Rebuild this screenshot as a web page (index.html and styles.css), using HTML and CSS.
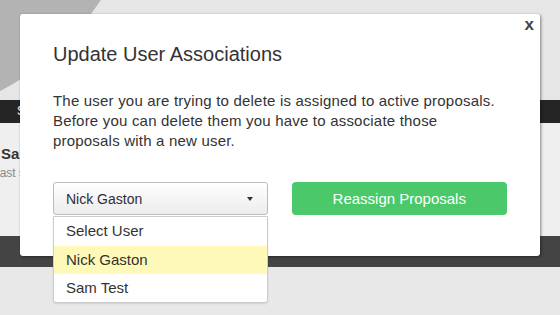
FILE: index.html
```html
<!DOCTYPE html>
<html lang="en">
<head>
    <meta charset="UTF-8">
    <title>Update User Associations</title>
    <link rel="stylesheet" href="styles.css">
</head>
<body>
    <div class="page">
        <header class="hero">
            <div class="avatar"></div>
        </header>
        <nav class="topbar"><span class="topbar-name">Sam Test</span></nav>
        <section class="profile">
            <div class="profile-name">Sam Test</div>
            <div class="profile-meta">Last seen 2 days ago</div>
        </section>
        <div class="band"></div>

        <div class="modal">
            <button class="modal-close">x</button>
            <h2 class="modal-title">Update User Associations</h2>
            <p class="modal-text">The user you are trying to delete is assigned to active proposals.<br>Before you can delete them you have to associate those<br>proposals with a new user.</p>
            <div class="actions">
                <div class="select">
                    <div class="select-value">
                        <span>Nick Gaston</span>
                        <span class="caret"></span>
                    </div>
                    <ul class="select-menu">
                        <li>Select User</li>
                        <li class="active">Nick Gaston</li>
                        <li>Sam Test</li>
                    </ul>
                </div>
                <button class="btn">Reassign Proposals</button>
            </div>
        </div>
    </div>
</body>
</html>
```

FILE: styles.css
```css
* {
    margin: 0;
    padding: 0;
    box-sizing: border-box;
}

body {
    font-family: "Liberation Sans", Arial, sans-serif;
    background: #e8e8e8;
    color: #333;
}

.page {
    position: relative;
    width: 560px;
    height: 315px;
    overflow: hidden;
}

.hero {
    height: 100px;
    background: #e6e6e6;
    overflow: hidden;
}

.avatar {
    width: 544px;
    height: 544px;
    margin: -422px 0 0 -398px;
    border-radius: 50%;
    background: #b3b3b3;
}

.topbar {
    height: 23px;
    background: #252525;
    padding-left: 17px;
}

.topbar-name {
    display: block;
    width: 3px;
    overflow: hidden;
    white-space: nowrap;
    color: #fff;
    font-size: 12px;
    line-height: 23px;
}

.profile {
    height: 113px;
    background: #efefef;
    padding: 22px 0 0 1px;
}

.profile-name {
    font-size: 15px;
    font-weight: bold;
    color: #333;
}

.profile-meta {
    margin: 4px 0 0 -8px;
    font-size: 12px;
    color: #888;
}

.band {
    height: 31px;
    background: #444;
}

.modal {
    position: absolute;
    top: 14px;
    left: 20px;
    width: 520px;
    height: 242px;
    background: #fff;
    border-radius: 3px;
    box-shadow: 1px 1px 3px rgba(0, 0, 0, 0.45);
    padding: 28px 33px 0;
}

.modal-close {
    position: absolute;
    top: 1px;
    right: 6px;
    border: none;
    background: none;
    font-family: "Liberation Sans", Arial, sans-serif;
    font-size: 17px;
    font-weight: bold;
    color: #444;
}

.modal-title {
    font-size: 20px;
    font-weight: normal;
    line-height: 24px;
    color: #333;
}

.modal-text {
    margin-top: 25px;
    font-size: 15px;
    line-height: 20px;
    letter-spacing: 0.2px;
    color: #333;
}

.actions {
    display: flex;
    gap: 24px;
    margin-top: 31px;
}

.select {
    position: relative;
    width: 215px;
}

.select-value {
    display: flex;
    justify-content: space-between;
    align-items: center;
    height: 33px;
    padding: 0 14px 0 12px;
    border: 1px solid #bbb;
    border-radius: 3px;
    background: linear-gradient(#fff, #ececec);
    font-size: 14px;
    color: #2e2e3a;
}

.caret {
    width: 0;
    height: 0;
    border-left: 3px solid transparent;
    border-right: 3px solid transparent;
    border-top: 4px solid #333;
}

.select-menu {
    position: absolute;
    top: 34px;
    left: 0;
    width: 215px;
    list-style: none;
    background: #fff;
    border: 1px solid #ccc;
    border-radius: 0 0 3px 3px;
    box-shadow: 0 1px 2px rgba(0, 0, 0, 0.1);
}

.select-menu li {
    height: 28px;
    line-height: 28px;
    padding-left: 12px;
    font-size: 15px;
    color: #333;
}

.select-menu li:first-child {
    height: 29px;
}

.select-menu li.active {
    background: #fef9b8;
}

.btn {
    width: 216px;
    height: 33px;
    border: none;
    border-radius: 4px;
    background: #4bc869;
    color: #fff;
    font-family: "Liberation Sans", Arial, sans-serif;
    font-size: 15px;
}
```
